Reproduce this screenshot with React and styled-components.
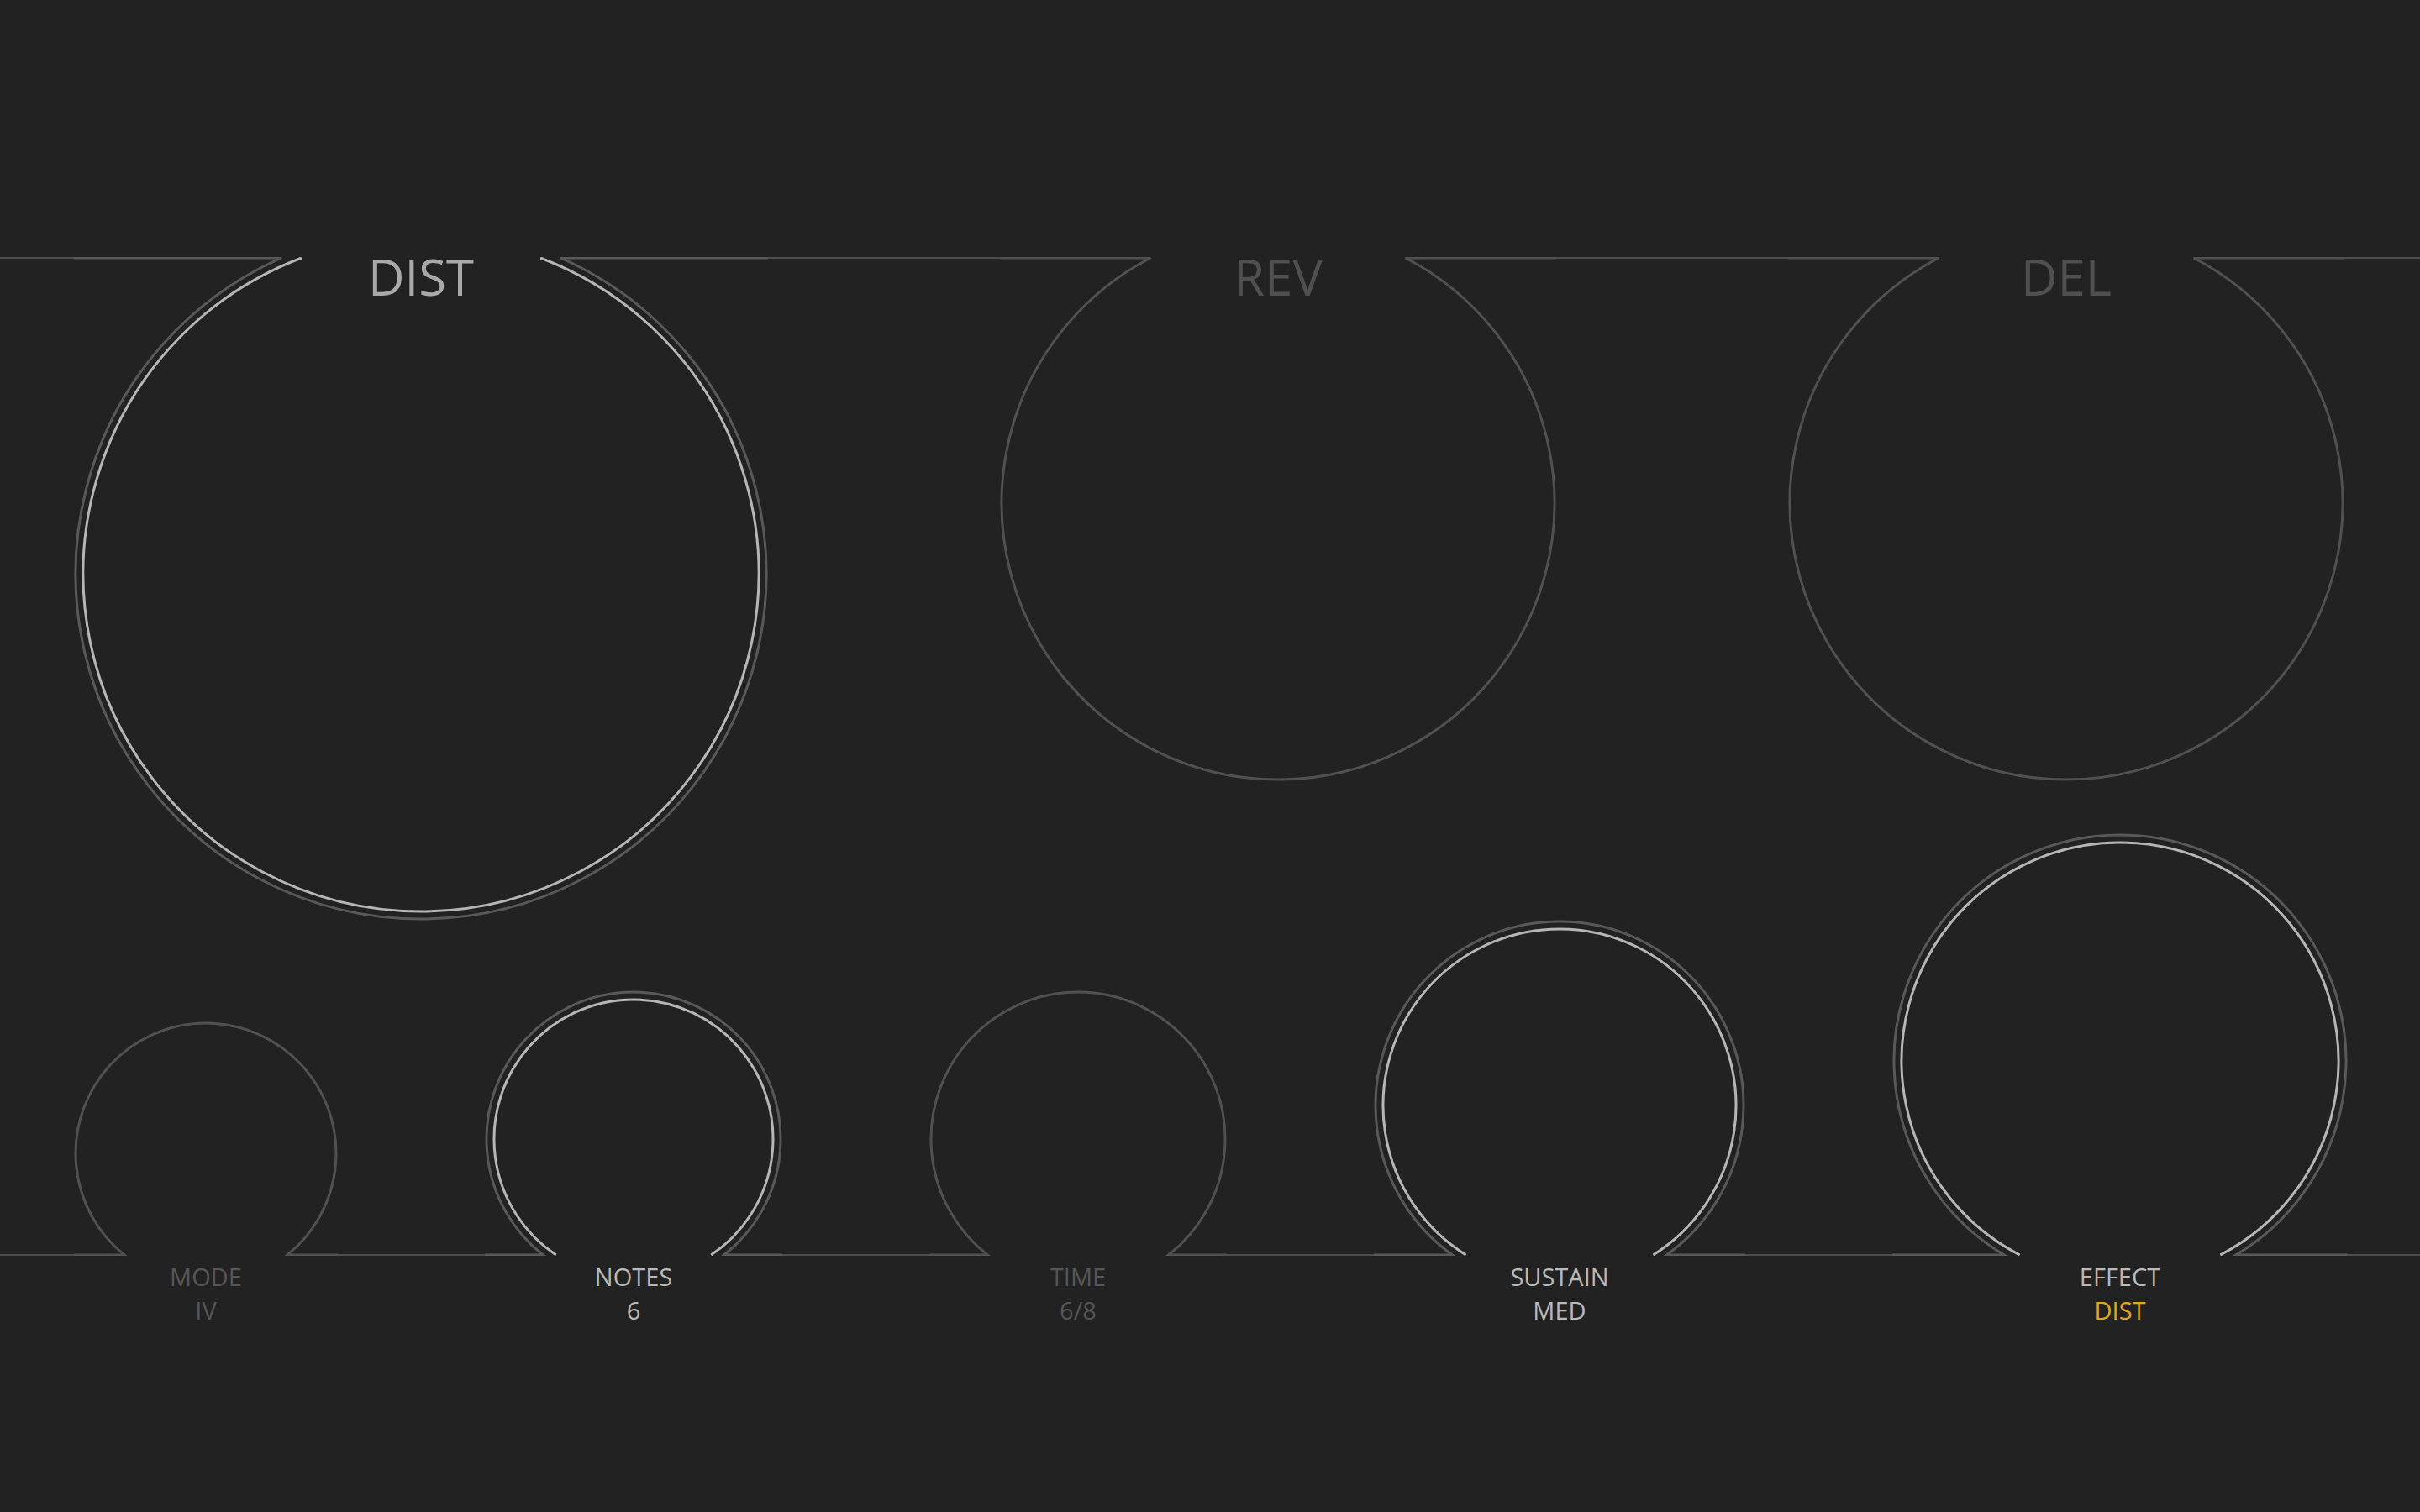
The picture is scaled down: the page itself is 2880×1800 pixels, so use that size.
import React from "react";
import styled, { createGlobalStyle } from "styled-components";

const GlobalStyle = createGlobalStyle`
  html, body {
    margin: 0;
    padding: 0;
    background: #222222;
  }
  body {
    font-family: "Open Sans", "Noto Sans", "DejaVu Sans", sans-serif;
  }
`;

const LINE = "#4d4d4d";
const RING_DIM = "#515151";
const RING_OUTER_ACTIVE = "#595959";
const RING_INNER_ACTIVE = "#b6b6b6";
const STROKE = 3;

const Panel = styled.main`
  display: grid;
  box-sizing: border-box;
  width: 100%;
  height: 1800px;
  padding: 306px 0 205px;
  overflow: hidden;
`;

const TopRow = styled.section`
  grid-area: 1 / 1;
  align-self: start;
  display: flex;
  align-items: flex-start;
`;

const BottomRow = styled.section`
  grid-area: 1 / 1;
  align-self: end;
  display: flex;
  align-items: flex-end;
`;

const Segment = styled.div`
  height: 2px;
  background: ${LINE};
  flex: ${(p) => (p.$w ? `0 0 ${p.$w}px` : "1 1 0")};
  margin-bottom: ${(p) => (p.$below ? `${p.$below}px` : "0")};
`;

const EffectCell = styled.div`
  display: grid;
  flex: none;
`;

const EffectTitle = styled.span`
  grid-area: 1 / 1;
  justify-self: center;
  align-self: start;
  margin-top: -7px;
  font-size: 60px;
  line-height: 1;
  color: ${(p) => (p.$active ? "#a9a9a9" : "#505050")};
`;

const Drawing = styled.svg`
  grid-area: 1 / 1;
  display: block;
`;

const KnobColumn = styled.div`
  display: flex;
  flex-direction: column;
  align-items: center;
  flex: none;
`;

const Caption = styled.div`
  box-sizing: border-box;
  height: 100px;
  padding-top: 5px;
  display: flex;
  flex-direction: column;
  align-items: center;
  font-size: 29px;
  line-height: 40px;
`;

const CaptionName = styled.span`
  color: ${(p) => (p.$active ? "#b9b9b9" : "#565656")};
`;

const CaptionValue = styled.span`
  color: ${(p) =>
    p.$accent ? "#e0a820" : p.$active ? "#b9b9b9" : "#565656"};
`;

const GAP = 9;

function Ring({ R, d, active, side }) {
  const W = 2 * R + 4;
  const top = side === "top";
  const y0 = top ? 1 : d + R + 2;
  const H = top ? y0 + d + R + 2 : y0 + 1;
  const sweep = top ? 0 : 1;
  const cx = R + 2;
  const h = Math.sqrt(R * R - d * d);
  const outer = `M 0 ${y0} L ${cx - h} ${y0} A ${R} ${R} 0 1 ${sweep} ${cx + h} ${y0} L ${W} ${y0}`;
  const r2 = R - GAP;
  const h2 = Math.sqrt(r2 * r2 - d * d);
  const inner = `M ${cx - h2} ${y0} A ${r2} ${r2} 0 1 ${sweep} ${cx + h2} ${y0}`;
  return (
    <Drawing width={W} height={H} viewBox={`0 0 ${W} ${H}`}>
      <path
        d={`M 0 ${y0} L ${cx - h} ${y0} M ${cx + h} ${y0} L ${W} ${y0}`}
        fill="none"
        stroke={LINE}
        strokeWidth="2"
      />
      <path
        d={outer}
        fill="none"
        stroke={active ? RING_OUTER_ACTIVE : RING_DIM}
        strokeWidth={STROKE}
        strokeLinejoin="miter"
      />
      {active && (
        <path d={inner} fill="none" stroke={RING_INNER_ACTIVE} strokeWidth={STROKE} />
      )}
    </Drawing>
  );
}

const effects = [
  { label: "DIST", R: 411, d: 376, active: true },
  { label: "REV", R: 329, d: 292 },
  { label: "DEL", R: 329, d: 292 },
];

const controls = [
  { name: "MODE", value: "IV", R: 155, d: 121 },
  { name: "NOTES", value: "6", R: 175, d: 138, active: true },
  { name: "TIME", value: "6/8", R: 175, d: 138 },
  { name: "SUSTAIN", value: "MED", R: 219, d: 178, active: true },
  { name: "EFFECT", value: "DIST", R: 269, d: 231, active: true, accent: true },
];

export default function App() {
  return (
    <>
      <GlobalStyle />
      <Panel>
        <TopRow>
          <Segment $w={88} />
          {effects.map((e, i) => (
            <React.Fragment key={e.label}>
              {i > 0 && <Segment />}
              <EffectCell>
                <Ring side="top" R={e.R} d={e.d} active={e.active} />
                <EffectTitle $active={e.active}>{e.label}</EffectTitle>
              </EffectCell>
            </React.Fragment>
          ))}
          <Segment $w={90} />
        </TopRow>
        <BottomRow>
          <Segment $w={88} $below={100} />
          {controls.map((c, i) => (
            <React.Fragment key={c.name}>
              {i > 0 && <Segment $below={100} />}
              <KnobColumn>
                <Ring side="bottom" R={c.R} d={c.d} active={c.active} />
                <Caption>
                  <CaptionName $active={c.active}>{c.name}</CaptionName>
                  <CaptionValue $active={c.active} $accent={c.accent}>
                    {c.value}
                  </CaptionValue>
                </Caption>
              </KnobColumn>
            </React.Fragment>
          ))}
          <Segment $w={86} $below={100} />
        </BottomRow>
      </Panel>
    </>
  );
}
